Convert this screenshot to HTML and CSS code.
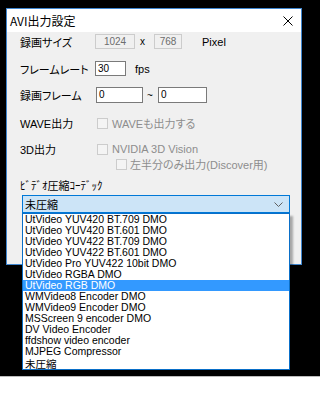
FILE: index.html
```html
<!DOCTYPE html>
<html lang="ja">
<head>
<meta charset="utf-8">
<title>AVI出力設定</title>
<link rel="stylesheet" href="styles.css">
</head>
<body>
<div class="screen">
  <div class="window">
    <div class="titlebar">
      <span class="title">AVI出力設定</span>
      <svg class="close" width="10" height="10" viewBox="0 0 10 10"><path d="M0.5 0.5 L9.5 9.5 M9.5 0.5 L0.5 9.5" stroke="#000" stroke-width="1" fill="none"/></svg>
    </div>
    <div class="body">
      <div class="row r1">
        <span class="label">録画サイズ</span>
        <span class="edit dis w40">1024</span>
        <span class="sep sx">x</span>
        <span class="edit dis w28">768</span>
        <span class="unit upx">Pixel</span>
      </div>
      <div class="row r2">
        <span class="label">フレームレート</span>
        <span class="edit w31">30</span>
        <span class="unit ufps">fps</span>
      </div>
      <div class="row r3">
        <span class="label">録画フレーム</span>
        <span class="edit w47 ml1">0</span>
        <span class="sep st">~</span>
        <span class="edit w49">0</span>
      </div>
      <div class="row r4">
        <span class="label">WAVE出力</span>
        <span class="check"></span>
        <span class="clabel">WAVEも出力する</span>
      </div>
      <div class="row r5">
        <span class="label">3D出力</span>
        <span class="check"></span>
        <span class="clabel">NVIDIA 3D Vision</span>
      </div>
      <div class="row r6">
        <span class="check sub"></span>
        <span class="clabel">左半分のみ出力(Discover用)</span>
      </div>
      <div class="row r7">
        <span class="label wide">ﾋﾞﾃﾞｵ圧縮ｺｰﾃﾞｯｸ</span>
      </div>
      <div class="combo">
        <span class="combo-text">未圧縮</span>
        <svg class="chev" width="9" height="5" viewBox="0 0 9 5"><path d="M0.5 0.5 L4.5 4.5 L8.5 0.5" stroke="#606060" stroke-width="1" fill="none"/></svg>
        <ul class="list">
          <li>UtVideo YUV420 BT.709 DMO</li>
          <li>UtVideo YUV420 BT.601 DMO</li>
          <li>UtVideo YUV422 BT.709 DMO</li>
          <li>UtVideo YUV422 BT.601 DMO</li>
          <li>UtVideo Pro YUV422 10bit DMO</li>
          <li>UtVideo RGBA DMO</li>
          <li class="sel">UtVideo RGB DMO</li>
          <li>WMVideo8 Encoder DMO</li>
          <li>WMVideo9 Encoder DMO</li>
          <li>MSScreen 9 encoder DMO</li>
          <li>DV Video Encoder</li>
          <li>ffdshow video encoder</li>
          <li>MJPEG Compressor</li>
          <li class="cjk">未圧縮</li>
        </ul>
      </div>
    </div>
  </div>
</div>
<div class="floor"></div>
</body>
</html>
```
FILE: styles.css
```css
* { box-sizing: border-box; }
html, body { margin: 0; padding: 0; }
body {
  width: 320px;
  height: 413px;
  background: #fff;
  overflow: hidden;
  font-family: "Liberation Sans", "Noto Sans CJK JP", sans-serif;
  color: #000;
}
.screen {
  height: 376px;
  background: #000;
  padding: 8px 0 0 6px;
}
.floor {
  height: 37px;
  border-top: 1px solid #bdbdbd;
  background: #fff;
}
.window {
  width: 296px;
  height: 257px;
  border: 1px solid #3f86cf;
  background: #f0f0f0;
}
.titlebar {
  height: 23px;
  background: #fff;
  display: flex;
  align-items: center;
  justify-content: space-between;
  padding: 0 8px 0 3px;
}
.title {
  font-family: "Noto Sans CJK JP", sans-serif;
  font-size: 12px;
  line-height: 14px;
  font-feature-settings: "palt";
}
.close { display: block; margin-top: 1px; }
.body {
  padding-left: 13px;
  position: relative;
}
.row {
  display: flex;
  align-items: center;
  font-size: 11px;
}
.label {
  width: 75px;
  flex-shrink: 0;
  font-size: 11px;
  font-feature-settings: "palt";
  white-space: nowrap;
}
.label.wide { width: auto; }
.r1 { margin-top: 2px; height: 15px; }
.r2 { margin-top: 12px; height: 15px; }
.r3 { margin-top: 11px; height: 16px; }
.r4 { margin-top: 14px; height: 12px; }
.r5 { margin-top: 14px; height: 12px; }
.r6 { margin-top: 3px; height: 12px; }
.r7 { margin-top: 9px; height: 12px; }
.edit {
  height: 15px;
  border: 1px solid #7a7a7a;
  background: #fff;
  font-size: 10px;
  line-height: 13px;
  padding-left: 2px;
  font-family: "Liberation Sans", sans-serif;
}
.edit.dis {
  border-color: #cccccc;
  background: #f0f0f0;
  color: #6d6d6d;
  text-align: center;
  padding-left: 0;
}
.r3 .edit { height: 16px; line-height: 14px; }
.w40 { width: 40px; }
.w28 { width: 28px; }
.w31 { width: 31px; }
.w47 { width: 47px; }
.w49 { width: 49px; }
.ml1 { margin-left: 1px; }
.sep { font-size: 10px; }
.sx { width: 19px; padding-left: 5px; }
.st { width: 15px; padding-left: 4px; }
.unit { font-size: 11px; }
.upx { margin-left: 20px; }
.ufps { margin-left: 9px; }
.check {
  width: 11px;
  height: 11px;
  border: 1px solid #cccccc;
  background: #f4f4f4;
  margin-left: 2px;
  flex-shrink: 0;
}
.check.sub { margin-left: 96px; }
.clabel {
  margin-left: 4px;
  color: #8d8d8d;
  font-size: 11px;
  font-feature-settings: "palt";
  white-space: nowrap;
}
.r6 .clabel { margin-left: 3px; }
.combo {
  position: relative;
  margin-top: 4px;
  margin-left: 2px;
  width: 268px;
  height: 18px;
  border: 1px solid #0078d7;
  background: #cce4f7;
  display: flex;
  align-items: center;
  justify-content: space-between;
  padding: 0 6px 0 2px;
}
.combo-text {
  font-family: "Noto Sans CJK JP", sans-serif;
  font-size: 11px;
  line-height: 14px;
}
.chev { display: block; }
.list {
  position: absolute;
  top: 17px;
  left: -1px;
  width: 268px;
  margin: 0;
  padding: 0;
  list-style: none;
  background: #fff;
  border: 1px solid #0a6fc8;
  box-shadow: 3px 3px 2px rgba(0, 0, 0, 0.3);
}
.list li {
  height: 11px;
  line-height: 11px;
  font-size: 10.5px;
  padding-left: 2px;
  white-space: nowrap;
  color: #000;
}
.list li.sel {
  background: #3399ff;
  color: #fff;
}
.list li.cjk {
  font-family: "Noto Sans CJK JP", sans-serif;
  font-size: 10.5px;
  height: 12px;
  line-height: 12px;
  padding-top: 1px;
}
```
